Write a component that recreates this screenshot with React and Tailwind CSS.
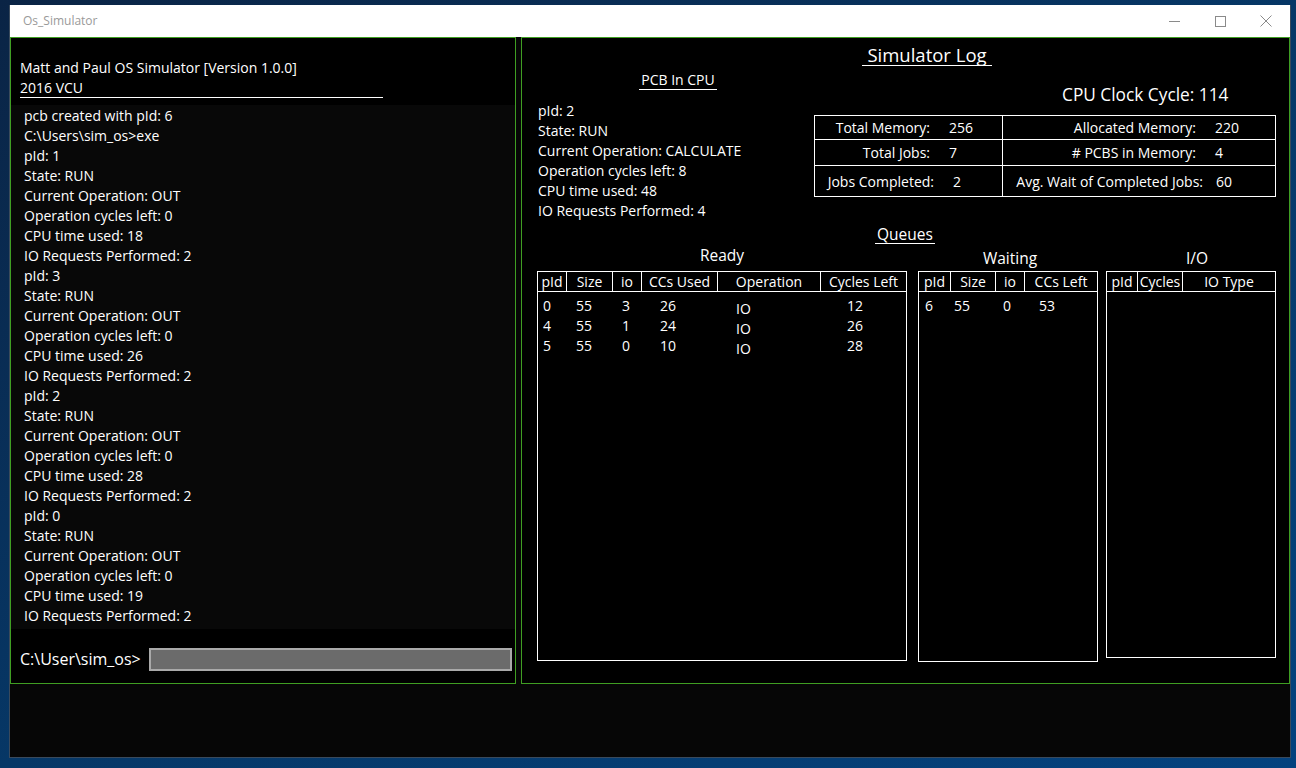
const LOG = [
  'pcb created with pId: 6',
  'C:\\Users\\sim_os>exe',
  'pId: 1', 'State: RUN', 'Current Operation: OUT', 'Operation cycles left: 0', 'CPU time used: 18', 'IO Requests Performed: 2',
  'pId: 3', 'State: RUN', 'Current Operation: OUT', 'Operation cycles left: 0', 'CPU time used: 26', 'IO Requests Performed: 2',
  'pId: 2', 'State: RUN', 'Current Operation: OUT', 'Operation cycles left: 0', 'CPU time used: 28', 'IO Requests Performed: 2',
  'pId: 0', 'State: RUN', 'Current Operation: OUT', 'Operation cycles left: 0', 'CPU time used: 19', 'IO Requests Performed: 2',
];

const PCB = ['pId: 2', 'State: RUN', 'Current Operation: CALCULATE', 'Operation cycles left: 8', 'CPU time used: 48', 'IO Requests Performed: 4'];

const READY = [
  ['0', '55', '3', '26', 'IO', '12'],
  ['4', '55', '1', '24', 'IO', '26'],
  ['5', '55', '0', '10', 'IO', '28'],
];

function Underlined({ children, className = '' }) {
  return <div className={`border-b border-white text-center ${className}`}>{children}</div>;
}

function QueueTable({ cols, rows = [], height }) {
  return (
    <div className={`border border-white flex flex-col ${height}`}>
      <div className="flex border-b border-white h-[20px] leading-[19px]">
        {cols.map((c, i) => (
          <div key={c.label} className={`${c.w} text-center shrink-0 ${i < cols.length - 1 ? 'border-r border-white' : 'flex-1'}`}>{c.label}</div>
        ))}
      </div>
      <div className="pt-[4px]">
        {rows.map((r, ri) => (
          <div key={ri} className="flex h-[20px] leading-[20px]">
            {r.map((v, i) => (
              <div key={i} className={`${cols[i].w} ${cols[i].pad} shrink-0 ${v === 'IO' ? 'pt-[3px]' : ''}`}>{v}</div>
            ))}
          </div>
        ))}
      </div>
    </div>
  );
}

function Cell({ label, value, lw, h, right, last, gap = 'ml-[19px]' }) {
  return (
    <div className={`${h} flex items-center ${right ? '' : 'border-r border-white'} ${last ? '' : 'border-b border-white'}`}>
      <span className={`${lw} text-right shrink-0`}>{label}</span>
      <span className={gap}>{value}</span>
    </div>
  );
}

export default function App() {
  return (
    <div className="w-[1296px] h-[768px] overflow-hidden bg-gradient-to-br from-[#0a2445] via-[#063766] to-[#04427e] pl-[9px] pt-[5px] text-white text-[14px]" style={{ fontFamily: '"Open Sans", "Noto Sans", sans-serif' }}>
      <div className="w-[1282px] h-[753px] bg-[#060606] border-x border-b border-[#3a4a5c] flex flex-col">
        {/* title bar */}
        <div className="h-[32px] bg-white flex items-center shrink-0">
          <span className="ml-[13px] text-[12px] text-[#9a9a9a]">Os_Simulator</span>
          <div className="ml-auto flex items-center">
            <div className="w-[46px] h-[32px] flex items-center justify-center">
              <svg width="11" height="11" viewBox="0 0 11 11"><path d="M0 5.5h11" stroke="#8a8a8a" strokeWidth="1" /></svg>
            </div>
            <div className="w-[46px] h-[32px] flex items-center justify-center">
              <svg width="11" height="11" viewBox="0 0 11 11"><rect x="0.5" y="0.5" width="10" height="10" fill="none" stroke="#8a8a8a" strokeWidth="1" /></svg>
            </div>
            <div className="w-[46px] h-[32px] flex items-center justify-center mr-[1px]">
              <svg width="12" height="12" viewBox="0 0 12 12"><path d="M0.5 0.5l11 11M11.5 0.5l-11 11" stroke="#8a8a8a" strokeWidth="1" /></svg>
            </div>
          </div>
        </div>

        <div className="flex h-[647px] shrink-0">
          {/* console panel */}
          <div className="w-[506px] border border-[#3f9e22] bg-black flex flex-col shrink-0">
            <div className="h-[67px] pl-[9px] pt-[20px] shrink-0">
              <div className="leading-[20px]">Matt and Paul OS Simulator [Version 1.0.0]</div>
              <div className="leading-[20px] w-[363px] border-b border-white h-[20px]">2016 VCU</div>
            </div>
            <div className="h-[524px] bg-[#080808] pl-[13px] pt-[1px]">
              {LOG.map((l, i) => (
                <div key={i} className="leading-[20px] h-[20px]">{l}</div>
              ))}
            </div>
            <div className="flex items-center pl-[9px] pr-[3px] mt-[18px]">
              <span className="text-[16px]">C:\User\sim_os&gt;</span>
              <div className="ml-auto w-[363px] h-[23px] bg-[#6b6b6b] border-2 border-[#a9a9a9]" />
            </div>
          </div>

          {/* simulator log panel */}
          <div className="ml-[5px] w-[769px] border border-[#3f9e22] bg-black flex flex-col shrink-0">
            <div className="mt-[6px] ml-[340px] w-[130px]">
              <Underlined className="text-[18.5px] leading-[21px] h-[22px]">Simulator Log</Underlined>
            </div>

            <div className="flex">
              <div className="w-[292px] shrink-0">
                <div className="mt-[5px] ml-[117px] w-[78px]">
                  <Underlined className="text-[14px] leading-[18px] h-[19px]">PCB In CPU</Underlined>
                </div>
                <div className="mt-[11px] pl-[16px]">
                  {PCB.map((l) => (
                    <div key={l} className="leading-[20px] h-[20px]">{l}</div>
                  ))}
                </div>
              </div>
              <div className="flex flex-col">
                <div className="mt-[18px] ml-[248px] text-[17.3px] leading-[22px]">CPU Clock Cycle: 114</div>
                <div className="mt-[9px] w-[462px] border border-white grid grid-cols-[188px_1fr]">
                  <Cell label="Total Memory:" value="256" lw="w-[115px]" h="h-[24px]" />
                  <Cell label="Allocated Memory:" value="220" lw="w-[193px]" h="h-[24px]" right />
                  <Cell label="Total Jobs:" value="7" lw="w-[115px]" h="h-[26px]" />
                  <Cell label="# PCBS in Memory:" value="4" lw="w-[193px]" h="h-[26px]" right />
                  <Cell label="Jobs Completed:" value="2" lw="w-[119px]" h="h-[30px]" last />
                  <Cell label="Avg. Wait of Completed Jobs:" value="60" lw="w-[200px]" h="h-[30px]" right last gap="ml-[13px]" />
                </div>
              </div>
            </div>

            <div className="mt-[4px] ml-[353px] w-[60px]">
              <Underlined className="text-[15.5px] leading-[18px] h-[19px]">Queues</Underlined>
            </div>

            <div className="flex pl-[15px]">
              <div className="w-[370px] shrink-0">
                <div className="text-center text-[15.5px] leading-[20px] pt-[1px]">Ready</div>
                <div className="mt-[6px]">
                  <QueueTable
                    height="h-[390px]"
                    cols={[
                      { label: 'pId', w: 'w-[29px]', pad: 'pl-[5px]' },
                      { label: 'Size', w: 'w-[46px]', pad: 'pl-[9px]' },
                      { label: 'io', w: 'w-[29px]', pad: 'pl-[9px]' },
                      { label: 'CCs Used', w: 'w-[76px]', pad: 'pl-[18px]' },
                      { label: 'Operation', w: 'w-[103px]', pad: 'pl-[18px]' },
                      { label: 'Cycles Left', w: 'w-[85px]', pad: 'pl-[26px]' },
                    ]}
                    rows={READY}
                  />
                </div>
              </div>
              <div className="w-[180px] ml-[11px] shrink-0">
                <div className="text-center text-[15.5px] leading-[20px] pt-[4px] pl-[4px]">Waiting</div>
                <div className="mt-[3px]">
                  <QueueTable
                    height="h-[391px]"
                    cols={[
                      { label: 'pId', w: 'w-[32px]', pad: 'pl-[6px]' },
                      { label: 'Size', w: 'w-[45px]', pad: 'pl-[3px]' },
                      { label: 'io', w: 'w-[29px]', pad: 'pl-[7px]' },
                      { label: 'CCs Left', w: 'w-[72px]', pad: 'pl-[14px]' },
                    ]}
                    rows={[['6', '55', '0', '53']]}
                  />
                </div>
              </div>
              <div className="w-[170px] ml-[8px] shrink-0">
                <div className="text-center text-[15.5px] leading-[20px] pt-[4px] pl-[12px]">I/O</div>
                <div className="mt-[3px]">
                  <QueueTable
                    height="h-[387px]"
                    cols={[
                      { label: 'pId', w: 'w-[31px]', pad: '' },
                      { label: 'Cycles', w: 'w-[45px]', pad: '' },
                      { label: 'IO Type', w: 'w-[92px]', pad: '' },
                    ]}
                  />
                </div>
              </div>
            </div>
          </div>
        </div>
      </div>
    </div>
  );
}
